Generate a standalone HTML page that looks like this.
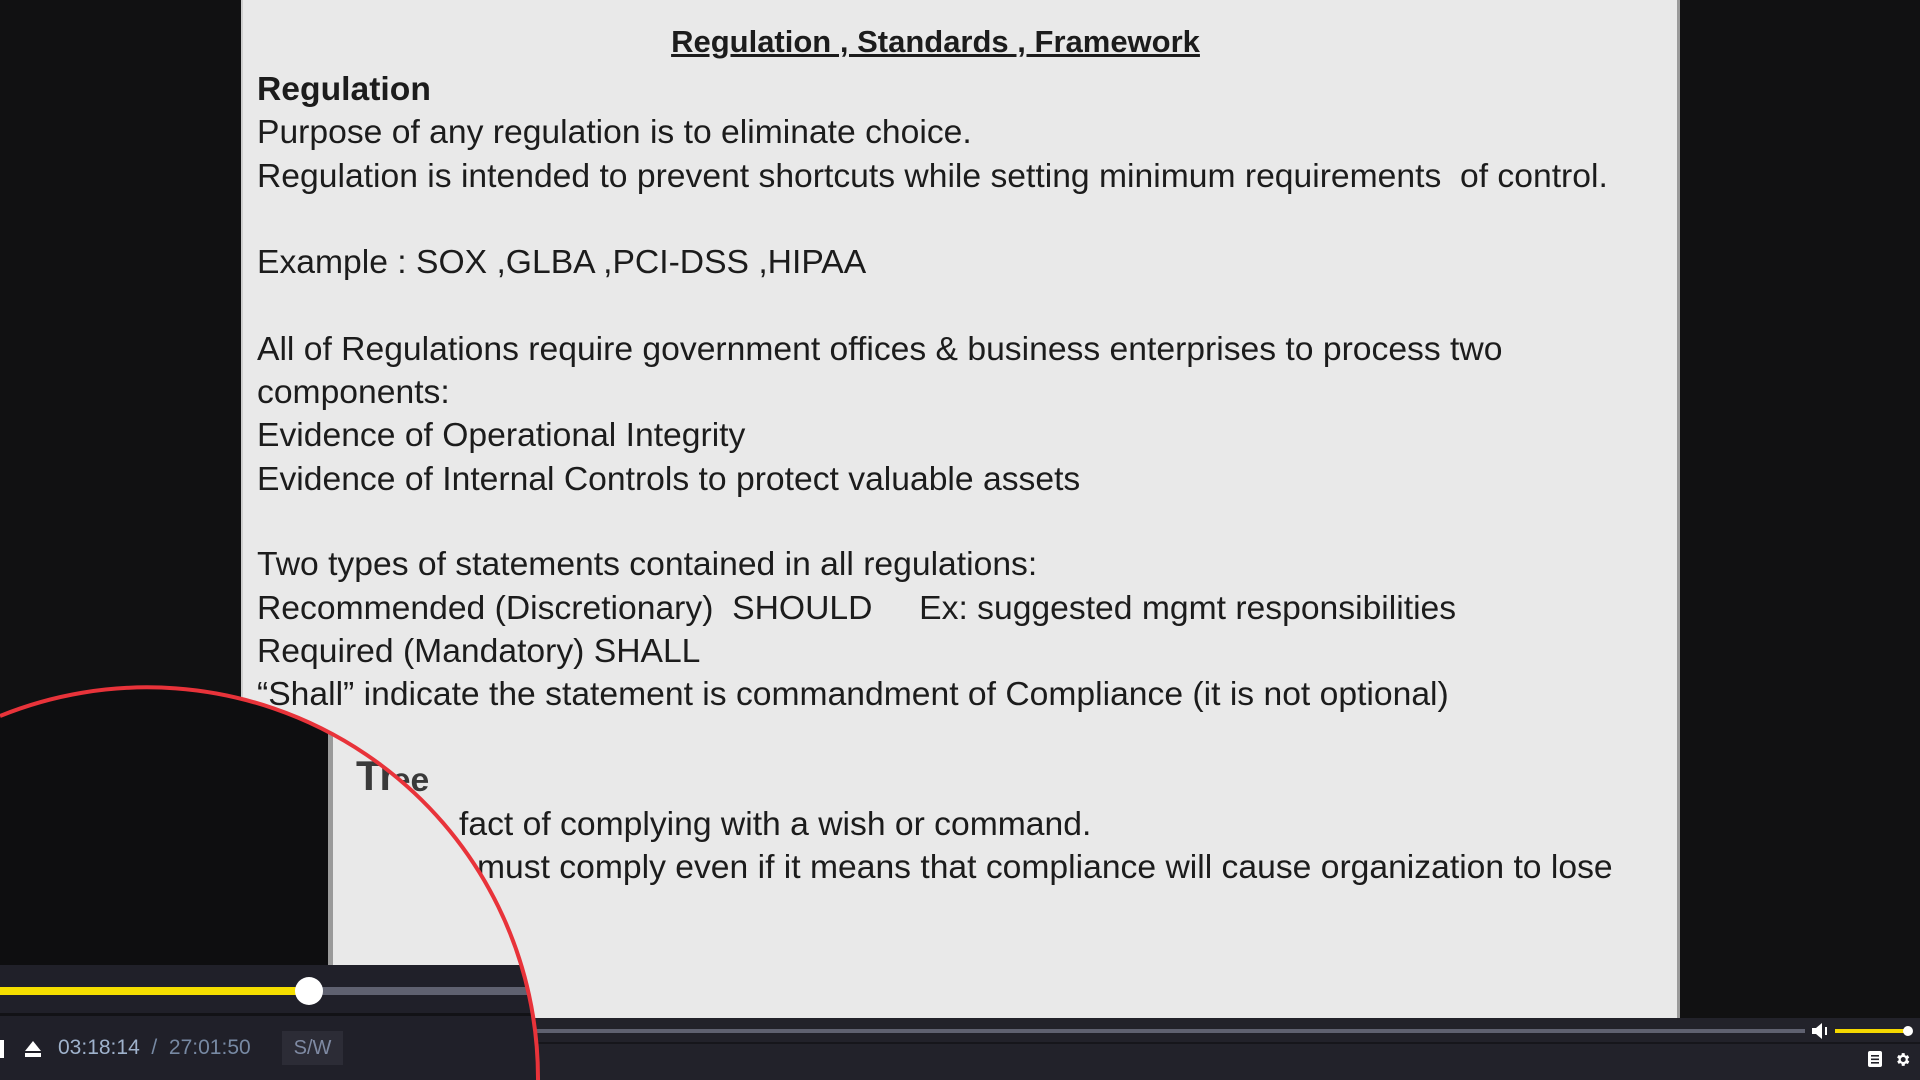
<!DOCTYPE html>
<html style="width:1920px;height:1080px;overflow:hidden"><head><meta charset="utf-8"><style>
*{margin:0;padding:0;box-sizing:border-box}
html,body{width:1920px;height:1080px;overflow:hidden}
body{background:#111112;font-family:"Liberation Sans",sans-serif}
#w{position:relative;width:1920px;height:1080px;overflow:hidden}
.slide{position:absolute;left:241px;top:0;width:1439px;height:1018px;background:#e9e9e9;border-right:3px solid #9a9a9a;border-left:2px solid #cfcfcf}
.t{position:absolute;left:14px;font-size:33px;color:#1c1c1c;white-space:nowrap;transform:scaleX(1.02);transform-origin:left center;line-height:40px}
.bar{position:absolute;left:0;top:1018px;width:1920px;height:62px;background:#22222a}
.in{position:absolute;left:0;top:0;width:1920px;height:1080px;background:#0e0e10;clip-path:circle(391px at 147px 1078px)}
</style></head><body><div id="w">
<div class="slide">
<div class="t" style="top:22px;left:0;width:1385px;text-align:center;font-weight:bold;text-decoration:underline;transform:none;font-size:31px">Regulation , Standards , Framework</div>
<div class="t" style="top:69px;font-weight:bold">Regulation</div>
<div class="t" style="top:112px">Purpose of any regulation is to eliminate choice.</div>
<div class="t" style="top:156px">Regulation is intended to prevent shortcuts while setting minimum requirements&nbsp; of control.</div>
<div class="t" style="top:242px">Example : SOX ,GLBA ,PCI-DSS ,HIPAA</div>
<div class="t" style="top:329px">All of Regulations require government offices &amp; business enterprises to process two</div>
<div class="t" style="top:372px">components:</div>
<div class="t" style="top:415px">Evidence of Operational Integrity</div>
<div class="t" style="top:459px">Evidence of Internal Controls to protect valuable assets</div>
<div class="t" style="top:544px">Two types of statements contained in all regulations:</div>
<div class="t" style="top:588px">Recommended (Discretionary)&nbsp; SHOULD &nbsp; &nbsp; Ex: suggested mgmt responsibilities</div>
<div class="t" style="top:631px">Required (Mandatory) SHALL</div>
<div class="t" style="top:674px">“Shall” indicate the statement is commandment of Compliance (it is not optional)</div>
<div class="t" style="top:760px;left:117px;font-weight:bold;color:#3a3a3a">Tree</div>
<div class="t" style="top:804px;left:216px">fact of complying with a wish or command.</div>
<div class="t" style="top:847px;left:234px">must comply even if it means that compliance will cause organization to lose</div>
</div>
<div class="bar">
<div style="position:absolute;left:0;top:11px;width:1805px;height:4px;background:#5f6170"></div>
<div style="position:absolute;left:0;top:24px;width:1920px;height:2px;background:#16161b"></div>
<svg style="position:absolute;left:1812px;top:5px" width="18" height="16" viewBox="0 0 18 16"><path d="M0 5h4l6-5v16l-6-5H0z" fill="#fff"/><rect x="13" y="4" width="2" height="8" fill="#fff"/></svg>
<div style="position:absolute;left:1835px;top:11px;width:73px;height:4px;background:#f5d800"></div>
<div style="position:absolute;left:1903px;top:8px;width:10px;height:10px;border-radius:50%;background:#fff"></div>
<svg style="position:absolute;left:1868px;top:33px" width="14" height="16" viewBox="0 0 14 16"><rect width="14" height="16" rx="2" fill="#fff"/><rect x="3" y="4" width="8" height="1.6" fill="#22222a"/><rect x="3" y="7.5" width="8" height="1.6" fill="#22222a"/><rect x="3" y="11" width="8" height="1.6" fill="#22222a"/></svg>
<svg style="position:absolute;left:1894px;top:33px" width="17" height="17" viewBox="0 0 24 24"><path fill="#fff" d="M19.4 13a7.5 7.5 0 000-2l2.1-1.6-2-3.5-2.5 1a7 7 0 00-1.7-1L15 3h-4l-.4 2.6a7 7 0 00-1.7 1l-2.5-1-2 3.5L6.6 11a7.5 7.5 0 000 2l-2.1 1.6 2 3.5 2.5-1a7 7 0 001.7 1L11 21h4l.4-2.6a7 7 0 001.7-1l2.5 1 2-3.5zM13 15.5a3.5 3.5 0 110-7 3.5 3.5 0 010 7z"/></svg>
</div>
<div class="in">
<div style="position:absolute;left:328px;top:0;width:1592px;height:965px;background:#e9e9e9;border-left:5px solid #9a9a9a"></div>
<div style="position:absolute;left:356px;top:752px;font-size:42px;font-weight:bold;color:#3a3a3a;white-space:nowrap">Tr</div>
<div style="position:absolute;left:0;top:965px;width:1920px;height:115px;background:#202029"></div>
<div style="position:absolute;left:0;top:987px;width:309px;height:8px;background:#f5de00"></div>
<div style="position:absolute;left:309px;top:987px;width:1000px;height:8px;background:#5f6170"></div>
<div style="position:absolute;left:295px;top:977px;width:28px;height:28px;border-radius:50%;background:#fff"></div>
<div style="position:absolute;left:0;top:1013px;width:1920px;height:3px;background:#121216"></div>
<div style="position:absolute;left:0;top:1040px;width:4px;height:18px;background:#fff"></div>
<svg style="position:absolute;left:24px;top:1040px" width="18" height="18" viewBox="0 0 18 18"><path d="M9 1L17 11H1z" fill="#fff"/><rect x="1" y="13" width="16" height="4" fill="#fff"/></svg>
<div style="position:absolute;left:58px;top:1036px;font-size:21px;color:#9fb2cc;white-space:nowrap">03:18:14 <span style="color:#7789a3">&nbsp;/&nbsp; 27:01:50</span></div>
<div style="position:absolute;left:282px;top:1031px;width:61px;height:34px;background:#2c2c36;color:#7f8aa3;font-size:20px;text-align:center;line-height:34px">S/W</div>
</div>
<svg style="position:absolute;left:0;top:0" width="1920" height="1080"><path d="M0 716 A391 391 0 0 1 538 1080" fill="none" stroke="#e8333a" stroke-width="4"/></svg>
</div></body></html>
